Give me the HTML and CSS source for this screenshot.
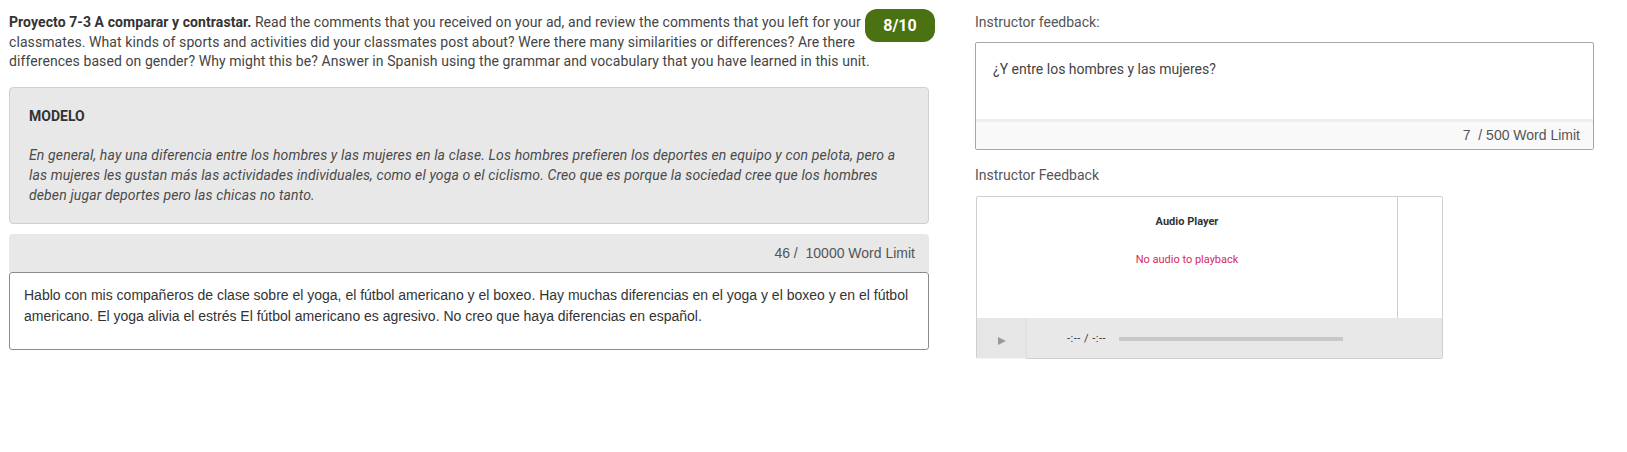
FILE: index.html
```html
<!DOCTYPE html>
<html lang="en">
<head>
<meta charset="utf-8">
<title>Proyecto 7-3</title>
<link rel="stylesheet" href="styles.css">
</head>
<body>
<div class="page">
  <div class="left">
    <div class="header">
      <div class="badge">8/10</div>
      <p class="prompt"><strong>Proyecto 7-3 A comparar y contrastar.</strong> Read the comments that you received on your ad, and review the comments that you left for your classmates. What kinds of sports and activities did your classmates post about? Were there many similarities or differences? Are there differences based on gender? Why might this be? Answer in Spanish using the grammar and vocabulary that you have learned in this unit.</p>
    </div>
    <div class="modelo">
      <div class="modelo-title">MODELO</div>
      <p class="modelo-text">En general, hay una diferencia entre los hombres y las mujeres en la clase. Los hombres prefieren los deportes en equipo y con pelota, pero a las mujeres les gustan más las actividades individuales, como el yoga o el ciclismo. Creo que es porque la sociedad cree que los hombres deben jugar deportes pero las chicas no tanto.</p>
    </div>
    <div class="wc-bar">46 /&nbsp; 10000 Word Limit</div>
    <div class="answer">Hablo con mis compañeros de clase sobre el yoga, el fútbol americano y el boxeo. Hay muchas diferencias en el yoga y el boxeo y en el fútbol americano. El yoga alivia el estrés El fútbol americano es agresivo. No creo que haya diferencias en español.</div>
  </div>
  <div class="right">
    <div class="label">Instructor feedback:</div>
    <div class="fb-box">
      <div class="fb-text">¿Y entre los hombres y las mujeres?</div>
      <div class="fb-foot">7 &nbsp;/ 500 Word Limit</div>
    </div>
    <div class="label label-audio">Instructor Feedback</div>
    <div class="audio">
      <div class="audio-top">
        <div class="audio-main">
          <div class="audio-title">Audio Player</div>
          <div class="audio-msg">No audio to playback</div>
        </div>
        <div class="audio-side"></div>
      </div>
      <div class="audio-bar">
        <div class="play"><span class="tri"></span></div>
        <div class="time">-:-- / -:--</div>
        <div class="progress"></div>
      </div>
    </div>
  </div>
</div>
</body>
</html>
```
FILE: styles.css
```css
html, body {
  margin: 0;
  padding: 0;
  background: #fff;
}
body {
  font-family: Roboto, "Liberation Sans", Arial, sans-serif;
  color: #444;
}
.page {
  display: flex;
  align-items: flex-start;
  padding-left: 9px;
}
.left {
  width: 927px;
  flex: none;
}
.right {
  width: 619px;
  margin-left: 39px;
  flex: none;
}
.header {
  padding-top: 9px;
}
.prompt {
  margin: 4px 0 0;
  font-size: 14px;
  line-height: 19.5px;
  letter-spacing: 0.08px;
  color: #444;
}
.prompt strong {
  color: #333;
  font-weight: 700;
}
.badge {
  float: right;
  width: 70px;
  height: 33px;
  margin: 0 1px 0 -4px;
  border-radius: 12px;
  background: #4b7212;
  color: #fff;
  font-weight: 700;
  font-size: 16px;
  line-height: 33px;
  text-align: center;
}
.modelo {
  margin-top: 15px;
  width: 920px;
  box-sizing: border-box;
  background: #e8e8e8;
  border: 1px solid #d0d0d0;
  border-radius: 4px;
  padding: 19px 19px 17px;
  font-size: 14px;
  color: #444;
}
.modelo-title {
  font-weight: 700;
  line-height: 19.6px;
  color: #333;
  margin-bottom: 20.4px;
}
.modelo-text {
  margin: 0;
  font-style: italic;
  line-height: 19.8px;
  letter-spacing: 0.13px;
  color: #4a4a4a;
}
.wc-bar {
  margin-top: 10px;
  width: 920px;
  box-sizing: border-box;
  height: 38px;
  background: #e8e8e8;
  border-radius: 4px 4px 0 0;
  padding-right: 14px;
  text-align: right;
  font-family: "Liberation Sans", Arial, sans-serif;
  font-size: 14px;
  line-height: 38px;
  color: #555;
}
.answer {
  width: 920px;
  box-sizing: border-box;
  border: 1px solid #8c8c8c;
  border-radius: 3px;
  padding: 12px 14px 22px;
  font-family: "Liberation Sans", Arial, sans-serif;
  font-size: 14px;
  line-height: 21px;
  color: #333;
}
.label {
  margin-top: 13px;
  font-size: 14px;
  line-height: 19.6px;
  color: #555;
}
.fb-box {
  margin-top: 9.4px;
  border: 1px solid #a6a6a6;
  border-radius: 2px;
}
.fb-text {
  height: 79px;
  box-sizing: border-box;
  padding: 17px 17px 0;
  border-bottom: 3px solid #eeeeee;
  font-size: 14px;
  line-height: 19.6px;
  color: #444;
}
.fb-foot {
  height: 27px;
  background: #f9f9f9;
  padding-right: 13px;
  text-align: right;
  font-family: "Liberation Sans", Arial, sans-serif;
  font-size: 14px;
  line-height: 27px;
  color: #555;
}
.label-audio {
  margin-top: 16px;
}
.audio {
  margin-top: 10px;
  margin-left: 1px;
  width: 467px;
  box-sizing: border-box;
  border: 1px solid #cfcfcf;
  border-radius: 2px;
}
.audio-top {
  display: flex;
  height: 121px;
}
.audio-main {
  width: 420px;
  padding-top: 18px;
  text-align: center;
  font-size: 11px;
  line-height: 14px;
}
.audio-side {
  flex: 1;
  border-left: 1px solid #cfcfcf;
}
.audio-title {
  font-weight: 700;
  color: #333;
}
.audio-msg {
  margin-top: 24px;
  color: #d62a5a;
}
.audio-bar {
  display: flex;
  align-items: flex-start;
  height: 40px;
  background: #e8e8e8;
}
.play {
  width: 49px;
  height: 49px;
  flex: none;
  border-right: 1px solid #dcdcdc;
  background: linear-gradient(#e6e6e6 0 40px, #f4f4f4 40px);
  position: relative;
}
.tri {
  position: absolute;
  left: 21px;
  top: 19px;
  width: 0;
  height: 0;
  border-left: 8px solid #9a9a9a;
  border-top: 4.5px solid transparent;
  border-bottom: 4.5px solid transparent;
}
.time {
  margin: 14px 0 0 40px;
  font-size: 11px;
  line-height: 14px;
  letter-spacing: 0.5px;
  color: #333;
}
.progress {
  margin: 19px 0 0 13px;
  width: 224px;
  height: 4px;
  background: #c8c8c8;
}
```
